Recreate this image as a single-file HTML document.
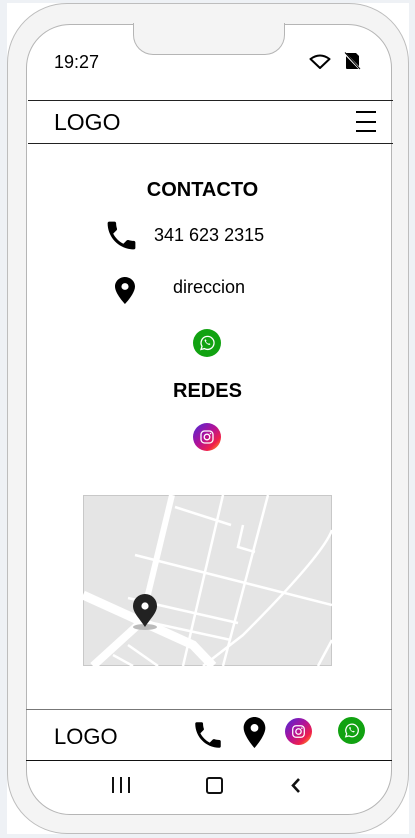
<!DOCTYPE html>
<html><head><meta charset="utf-8"><style>
*{margin:0;padding:0;box-sizing:border-box}
html,body{width:415px;height:838px;overflow:hidden;background:#eef1f5;font-family:"Liberation Sans",Arial,sans-serif;color:#000}
.a{position:absolute}
#wb{left:7px;top:3px;width:402px;height:831px;background:#fff}
#body{left:7px;top:3px;width:402px;height:831px;background:#f4f4f4;border:1px solid #bdbdbd;border-radius:60px}
#scr{left:26px;top:24px;width:366px;height:791px;background:#fff;border:1px solid #b5b5b5;border-radius:44px}
#notch{left:133px;top:23px;width:152px;height:32px;background:#f4f4f4;border:1px solid #b5b5b5;border-top:none;border-radius:0 0 20px 20px}
.line{height:1px;background:#222;left:28px;width:365px}
.t{white-space:nowrap}
</style></head><body>
<div class="a" id="wb"></div>
<div class="a" id="body"></div>
<div class="a" id="scr"></div>
<div class="a" id="notch"></div>
<div class="a t" style="left:54px;top:52px;font-size:18px">19:27</div>
<svg class="a" style="left:309px;top:54px" width="22" height="16" viewBox="0 0 22 16"><path d="M1.5 5 Q11 -2 20.5 5 L11 14 Z" fill="none" stroke="#000" stroke-width="2" stroke-linejoin="round"/></svg>
<svg class="a" style="left:344px;top:52px" width="17" height="18" viewBox="0 0 17 18"><path d="M2 1h10l3 3v13H3a1 1 0 0 1-1-1z" fill="#000"/><path d="M0.5 1 L16.5 17.5" stroke="#fff" stroke-width="2.2"/><path d="M1 0.5 L16 17" stroke="#000" stroke-width="1"/></svg>
<div class="a line" style="top:100px"></div>
<div class="a line" style="top:143px"></div>
<div class="a t" style="left:54px;top:109px;font-size:23px">LOGO</div>
<div class="a" style="left:356px;top:111px;width:20px;height:2px;background:#000"></div>
<div class="a" style="left:356px;top:121px;width:20px;height:2px;background:#000"></div>
<div class="a" style="left:356px;top:130px;width:20px;height:2px;background:#000"></div>

<div class="a t" style="left:0;width:415px;text-align:center;top:179px;font-size:20px;font-weight:bold;padding-right:10px">CONTACTO</div>
<svg class="a" style="left:103px;top:217px" width="37" height="37" viewBox="0 0 24 24"><path d="M6.62 10.79c1.44 2.83 3.76 5.14 6.59 6.59l2.2-2.2c.27-.27.67-.36 1.02-.24 1.12.37 2.33.57 3.57.57.55 0 1 .45 1 1V20c0 .55-.45 1-1 1-9.39 0-17-7.61-17-17 0-.55.45-1 1-1h3.5c.55 0 1 .45 1 1 0 1.25.2 2.45.57 3.57.11.35.03.74-.25 1.02l-2.2 2.2z"/></svg>
<div class="a t" style="left:154px;top:225px;font-size:18px">341 623 2315</div>
<svg class="a" style="left:115px;top:277px" width="20" height="27" viewBox="5 2 14 20" preserveAspectRatio="none"><path d="M12 2C8.13 2 5 5.13 5 9c0 5.25 7 13 7 13s7-7.75 7-13c0-3.87-3.13-7-7-7zm0 9.5a2.5 2.5 0 010-5 2.5 2.5 0 010 5z"/></svg>
<div class="a t" style="left:173px;top:277px;font-size:18px">direccion</div>
<svg class="a" style="left:193px;top:329px" width="28" height="28" viewBox="0 0 28 28"><circle cx="14" cy="14" r="14" fill="#11a211"/><path d="M8 20.5l1-3.2a6.5 6.5 0 1 1 2.4 2.3z" fill="none" stroke="#fff" stroke-width="1.3"/><path d="M11.5 11c.5 2.5 2.5 4.5 5 5l1-1-1.5-.8-.7.6c-1-.4-2-1.4-2.4-2.4l.6-.7-.8-1.5z" fill="#fff"/></svg>
<div class="a t" style="left:0;width:415px;text-align:center;top:380px;font-size:20px;font-weight:bold">REDES</div>
<svg class="a" style="left:193px;top:423px" width="28" height="28" viewBox="0 0 28 28"><defs><linearGradient id="ig" x1="0" y1="0" x2="1" y2="1"><stop offset="0" stop-color="#4a2ad8"/><stop offset=".45" stop-color="#b0129a"/><stop offset=".75" stop-color="#f0204a"/><stop offset="1" stop-color="#ffc21a"/></linearGradient></defs><circle cx="14" cy="14" r="14" fill="url(#ig)"/><rect x="8" y="8" width="12" height="12" rx="3.5" fill="none" stroke="#fff" stroke-width="1.3"/><circle cx="14" cy="14" r="2.8" fill="none" stroke="#fff" stroke-width="1.3"/><circle cx="17.5" cy="10.5" r=".8" fill="#fff"/></svg>

<svg class="a" style="left:83px;top:495px" width="249" height="171" viewBox="0 0 249 171">
<rect x=".5" y=".5" width="248" height="170" fill="#e5e5e5" stroke="#c8c8c8"/>
<g stroke="#fff" fill="none">
<path d="M89 0 L60 120" stroke-width="6"/>
<path d="M0 100 L110 150 L130 171" stroke-width="9"/>
<path d="M55 130 L10 171" stroke-width="8"/>
<path d="M92 12 L148 30 M140 0 L100 171 M185 0 L140 171 M160 30 L155 52 L172 57 M52 60 L249 110 M45 103 L155 128 M42 122 L148 145 M249 35 Q240 60 160 140 L120 171 M249 145 L235 171 M45 150 L75 171 M30 160 L50 171" stroke-width="2.5"/>
</g>
<ellipse cx="62" cy="132" rx="12" ry="3" fill="#bbb"/>
<path d="M62 132 C57 124 50 118 50 111 a12 12 0 0 1 24 0 c0 7-7 13-12 21z" fill="#222"/>
<circle cx="62" cy="111" r="3.6" fill="#fff"/>
</svg>

<div class="a" style="left:26px;top:709px;width:366px;height:1px;background:#777"></div>
<div class="a" style="left:26px;top:760px;width:366px;height:1px;background:#111"></div>
<div class="a t" style="left:54px;top:724px;font-size:22px">LOGO</div>
<svg class="a" style="left:191px;top:718px" width="34" height="34" viewBox="0 0 24 24"><path d="M6.62 10.79c1.44 2.83 3.76 5.14 6.59 6.59l2.2-2.2c.27-.27.67-.36 1.02-.24 1.12.37 2.33.57 3.57.57.55 0 1 .45 1 1V20c0 .55-.45 1-1 1-9.39 0-17-7.61-17-17 0-.55.45-1 1-1h3.5c.55 0 1 .45 1 1 0 1.25.2 2.45.57 3.57.11.35.03.74-.25 1.02l-2.2 2.2z"/></svg>
<svg class="a" style="left:242px;top:717px" width="25" height="31" viewBox="5 2 14 20"><path d="M12 2C8.13 2 5 5.13 5 9c0 5.25 7 13 7 13s7-7.75 7-13c0-3.870-3.13-7-7-7zm0 9.5a2.5 2.5 0 010-5 2.5 2.5 0 010 5z"/></svg>
<svg class="a" style="left:285px;top:718px" width="27" height="27" viewBox="0 0 28 28"><circle cx="14" cy="14" r="14" fill="url(#ig)"/><rect x="8" y="8" width="12" height="12" rx="3.5" fill="none" stroke="#fff" stroke-width="1.3"/><circle cx="14" cy="14" r="2.8" fill="none" stroke="#fff" stroke-width="1.3"/><circle cx="17.5" cy="10.5" r=".8" fill="#fff"/></svg>
<svg class="a" style="left:338px;top:717px" width="27" height="27" viewBox="0 0 28 28"><circle cx="14" cy="14" r="14" fill="#11a211"/><path d="M8 20.5l1-3.2a6.5 6.5 0 1 1 2.4 2.3z" fill="none" stroke="#fff" stroke-width="1.3"/><path d="M11.5 11c.5 2.5 2.5 4.5 5 5l1-1-1.5-.8-.7.6c-1-.4-2-1.4-2.4-2.4l.6-.7-.8-1.5z" fill="#fff"/></svg>

<div class="a" style="left:112px;top:777px;width:2px;height:16px;background:#111"></div>
<div class="a" style="left:120px;top:777px;width:2px;height:16px;background:#111"></div>
<div class="a" style="left:128px;top:777px;width:2px;height:16px;background:#111"></div>
<div class="a" style="left:206px;top:777px;width:17px;height:17px;border:2px solid #111;border-radius:3px"></div>
<svg class="a" style="left:289px;top:777px" width="14" height="17" viewBox="0 0 14 17"><path d="M10 2 L4 8.5 L10 15" fill="none" stroke="#111" stroke-width="2.6"/></svg>
</body></html>
